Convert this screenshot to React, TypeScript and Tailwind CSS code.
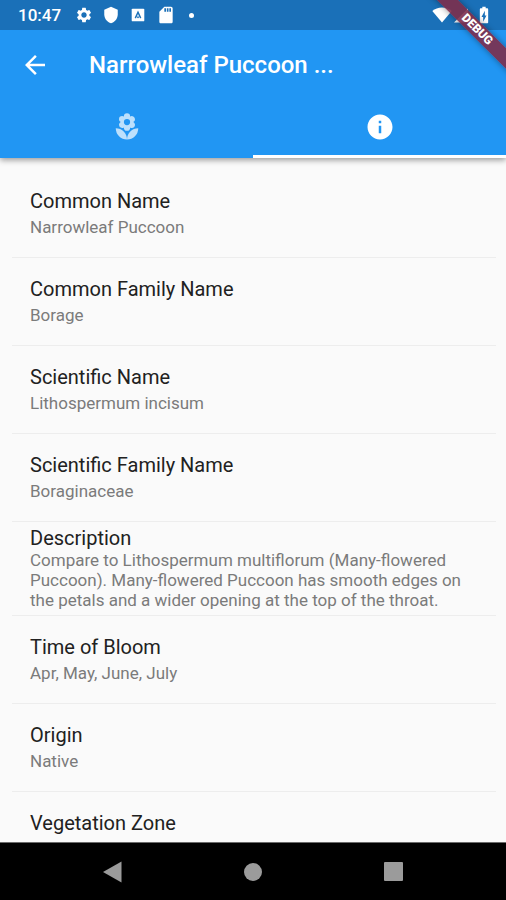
import {
  MdArrowBack,
  MdBatteryChargingFull,
  MdInfo,
  MdLocalFlorist,
  MdSdCard,
  MdSettings,
  MdShield,
} from "react-icons/md";

type Detail = {
  label: string;
  value?: string;
  dense?: boolean;
};

const details: Detail[] = [
  { label: "Common Name", value: "Narrowleaf Puccoon" },
  { label: "Common Family Name", value: "Borage" },
  { label: "Scientific Name", value: "Lithospermum incisum" },
  { label: "Scientific Family Name", value: "Boraginaceae" },
  {
    label: "Description",
    value:
      "Compare to Lithospermum multiflorum (Many-flowered Puccoon). Many-flowered Puccoon has smooth edges on the petals and a wider opening at the top of the throat.",
    dense: true,
  },
  { label: "Time of Bloom", value: "Apr, May, June, July" },
  { label: "Origin", value: "Native" },
  { label: "Vegetation Zone" },
];

function StatusBar() {
  return (
    <div className="flex h-[30px] items-center bg-[#1a70b8] pr-3 pl-[18px] text-white">
      <span className="text-[17px] leading-none font-medium">10:47</span>
      <div className="ml-[14px] flex items-center gap-[9px]">
        <MdSettings className="size-[18px]" />
        <MdShield className="size-[18px]" />
        <svg viewBox="0 0 20 20" className="size-[18px]">
          <rect x="3" y="3" width="14" height="14" rx="1" fill="currentColor" />
          <path d="M7 13.500 10 7l3 6.500" fill="none" stroke="#1a70b8" strokeWidth="1.600" />
          <circle cx="10" cy="12.500" r="1" fill="#1a70b8" />
        </svg>
        <MdSdCard className="size-[20px]" />
        <span className="ml-1 size-[5px] rounded-full bg-white" />
      </div>
      <div className="ml-auto flex items-center">
        <svg viewBox="0 0 20 20" className="size-5">
          <path d="M10 17.500.3 6C2.900 3.700 6.300 2.400 10 2.400s7.100 1.300 9.700 3.600z" fill="currentColor" />
        </svg>
        <svg viewBox="0 0 22 20" className="h-5 w-[22px]">
          <path d="M2 17.500 16 3.500v14z" fill="currentColor" />
        </svg>
        <MdBatteryChargingFull className="size-5" />
      </div>
    </div>
  );
}

function DebugBanner() {
  return (
    <div className="pointer-events-none absolute top-0 right-0 z-10 size-20 overflow-hidden">
      <div className="absolute top-[22px] -right-[31px] h-[15px] w-[120px] rotate-45 bg-[#7d2e4b]/90 text-center text-xs leading-[15px] font-black text-white shadow-[0_0_6px_rgba(0,0,0,0.4)]">
        DEBUG
      </div>
    </div>
  );
}

function DetailRow({ label, value, dense }: Detail) {
  return (
    <div
      className={
        dense
          ? "min-h-[94px] border-b border-[#ededed] px-[18px] pt-1"
          : "min-h-[88px] border-b border-[#ededed] px-[18px] pt-[19px]"
      }
    >
      <dt className="text-xl leading-6 text-[#212121]">{label}</dt>
      {value && (
        <dd className={dense ? "text-[17px] leading-5 text-[#7b7b7b]" : "mt-1 text-[17px] leading-5 text-[#7b7b7b]"}>
          {value}
        </dd>
      )}
    </div>
  );
}

function SystemNav() {
  return (
    <nav className="flex h-[58px] shrink-0 justify-center border-t border-[#6b6b6b] bg-black text-[#9b9b9b]">
      <button aria-label="Back" className="flex w-[140px] items-center justify-center">
        <svg viewBox="0 0 22 22" className="size-[22px]">
          <path d="M1 11 19.500.5v21z" fill="currentColor" />
        </svg>
      </button>
      <button aria-label="Home" className="flex w-[140px] items-center justify-center">
        <span className="size-[18px] rounded-full bg-current" />
      </button>
      <button aria-label="Overview" className="flex w-[140px] items-center justify-center">
        <span className="size-[19px] rounded-[1px] bg-current" />
      </button>
    </nav>
  );
}

export default function App() {
  return (
    <div className="flex h-screen flex-col bg-[#fafafa] font-[Roboto,sans-serif]">
      <header className="relative z-10 shrink-0 bg-[#2196f3] text-white shadow-[0_2px_6px_rgba(0,0,0,0.4)]">
        <StatusBar />
        <DebugBanner />
        <div className="flex h-[69px] items-center pl-5">
          <button aria-label="Go back">
            <MdArrowBack className="size-[30px]" />
          </button>
          <h1 className="ml-[39px] text-2xl font-medium">Narrowleaf Puccoon ...</h1>
        </div>
        <div role="tablist" className="grid h-[59px] grid-cols-2">
          <button
            role="tab"
            aria-label="Photos"
            aria-selected="false"
            className="flex items-center justify-center border-b-[3px] border-transparent text-white/70"
          >
            <MdLocalFlorist className="size-[30px]" />
          </button>
          <button
            role="tab"
            aria-label="Details"
            aria-selected="true"
            className="flex items-center justify-center border-b-[3px] border-white"
          >
            <MdInfo className="size-[30px]" />
          </button>
        </div>
      </header>

      <main className="min-h-0 flex-1 overflow-hidden pt-3 pr-[10px] pl-3">
        <dl>
          {details.map((detail) => (
            <DetailRow key={detail.label} {...detail} />
          ))}
        </dl>
      </main>

      <SystemNav />
    </div>
  );
}
